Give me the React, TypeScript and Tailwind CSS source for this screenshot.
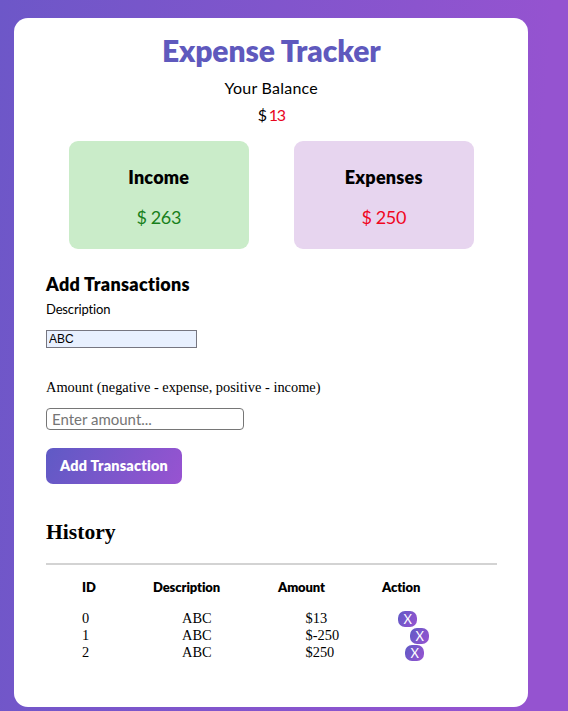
const history = [
  { id: 0, description: "ABC", amount: 13 },
  { id: 1, description: "ABC", amount: -250 },
  { id: 2, description: "ABC", amount: 250 },
];

function SummaryCard({ title, amount, tone }: { title: string; amount: string; tone: "income" | "expense" }) {
  const income = tone === "income";
  return (
    <div className={`h-[108px] w-[180px] rounded-[9px] pt-6 text-center ${income ? "bg-[#caecc9]" : "bg-[#e7d5ef]"}`}>
      <h2 className="text-[18px] leading-6 font-extrabold tracking-[0.2px]">{title}</h2>
      <p className={`mt-4 text-[18px] leading-6 tracking-[-0.4px] ${income ? "text-[#18801b]" : "text-[#f0061f]"}`}>
        {amount}
      </p>
    </div>
  );
}

export default function App() {
  return (
    <div className="h-[711px] w-full overflow-hidden bg-[linear-gradient(95deg,#6d57c8_0%,#9553d0_88%)] pt-[18px] pl-[14px] font-[Lato,sans-serif] text-black [font-variant-ligatures:none]">
      <main className="h-[689px] w-[513.5px] rounded-[14px] bg-white pt-[14px] pr-[31px] pl-8">
        <h1 className="text-center text-[30px] leading-9 font-extrabold tracking-[-0.1px] text-[#5f59bd]">Expense Tracker</h1>
        <div className="mt-1.5 text-center text-base leading-[27px]">
          <p className="tracking-[0.25px]">Your Balance</p>
          <p className="tracking-[-1.2px]">
            $ <span className="text-[#e8061f]">13</span>
          </p>
        </div>

        <section className="mt-[13px] flex justify-center gap-[45px]">
          <SummaryCard title="Income" amount="$ 263" tone="income" />
          <SummaryCard title="Expenses" amount="$ 250" tone="expense" />
        </section>

        <form className="mt-[23px] flex flex-col items-start">
          <h2 className="text-[18px] leading-6 font-extrabold tracking-[0.3px]">Add Transactions</h2>
          <label className="mt-[3px] text-[13px] leading-5 tracking-[-0.15px]">Description</label>
          <input
            className="mt-[11px] h-[18px] w-[151px] border border-[#767680] bg-[#e8f0fe] px-0.5 font-['Liberation_Sans',sans-serif] text-[12px] leading-4"
            defaultValue="ABC"
          />
          <label className="mt-[29px] font-['Liberation_Serif',serif] text-[14.4px] leading-5">
            Amount (negative - expense, positive - income)
          </label>
          <input
            className="mt-[11px] h-[22px] w-[198px] rounded-[4px] border border-[#767676] px-[5px] text-[15px] placeholder:text-[#757575]"
            placeholder="Enter amount..."
          />
          <button
            type="button"
            className="mt-[18px] h-9 w-[136px] rounded-[7px] bg-[linear-gradient(118deg,#5f5ac5,#9853d1)] text-[14.4px] font-extrabold tracking-[0.2px] whitespace-nowrap text-white"
          >
            Add Transaction
          </button>
        </form>

        <section>
          <h2 className="mt-[35px] font-['Liberation_Serif',serif] text-[21.6px] leading-[26px] font-bold">History</h2>
          <hr className="mt-[18px] border-0 border-t-2 border-[#d3d3d3]" />
          <div className="mt-3 grid grid-cols-[71px_125px_104px_1fr] pl-9 text-[13px] leading-5 font-extrabold tracking-[-0.1px]">
            <span>ID</span>
            <span>Description</span>
            <span>Amount</span>
            <span>Action</span>
          </div>
          <ul className="mt-[13px] pl-9 font-['Liberation_Serif',serif] text-[14.4px] leading-[17px]">
            {history.map((item) => (
              <li key={item.id} className="flex h-[17px]">
                <span className="w-[100px]">{item.id}</span>
                <span className="w-[123.5px]">{item.description}</span>
                <span>${item.amount}</span>
                <button className="mt-px ml-[71px] h-4 w-[19px] rounded-[7px] bg-[linear-gradient(118deg,#5f5ac5,#9853d1)] font-[Lato,sans-serif] text-[13px] leading-[15px] text-white">
                  X
                </button>
              </li>
            ))}
          </ul>
        </section>
      </main>
    </div>
  );
}
